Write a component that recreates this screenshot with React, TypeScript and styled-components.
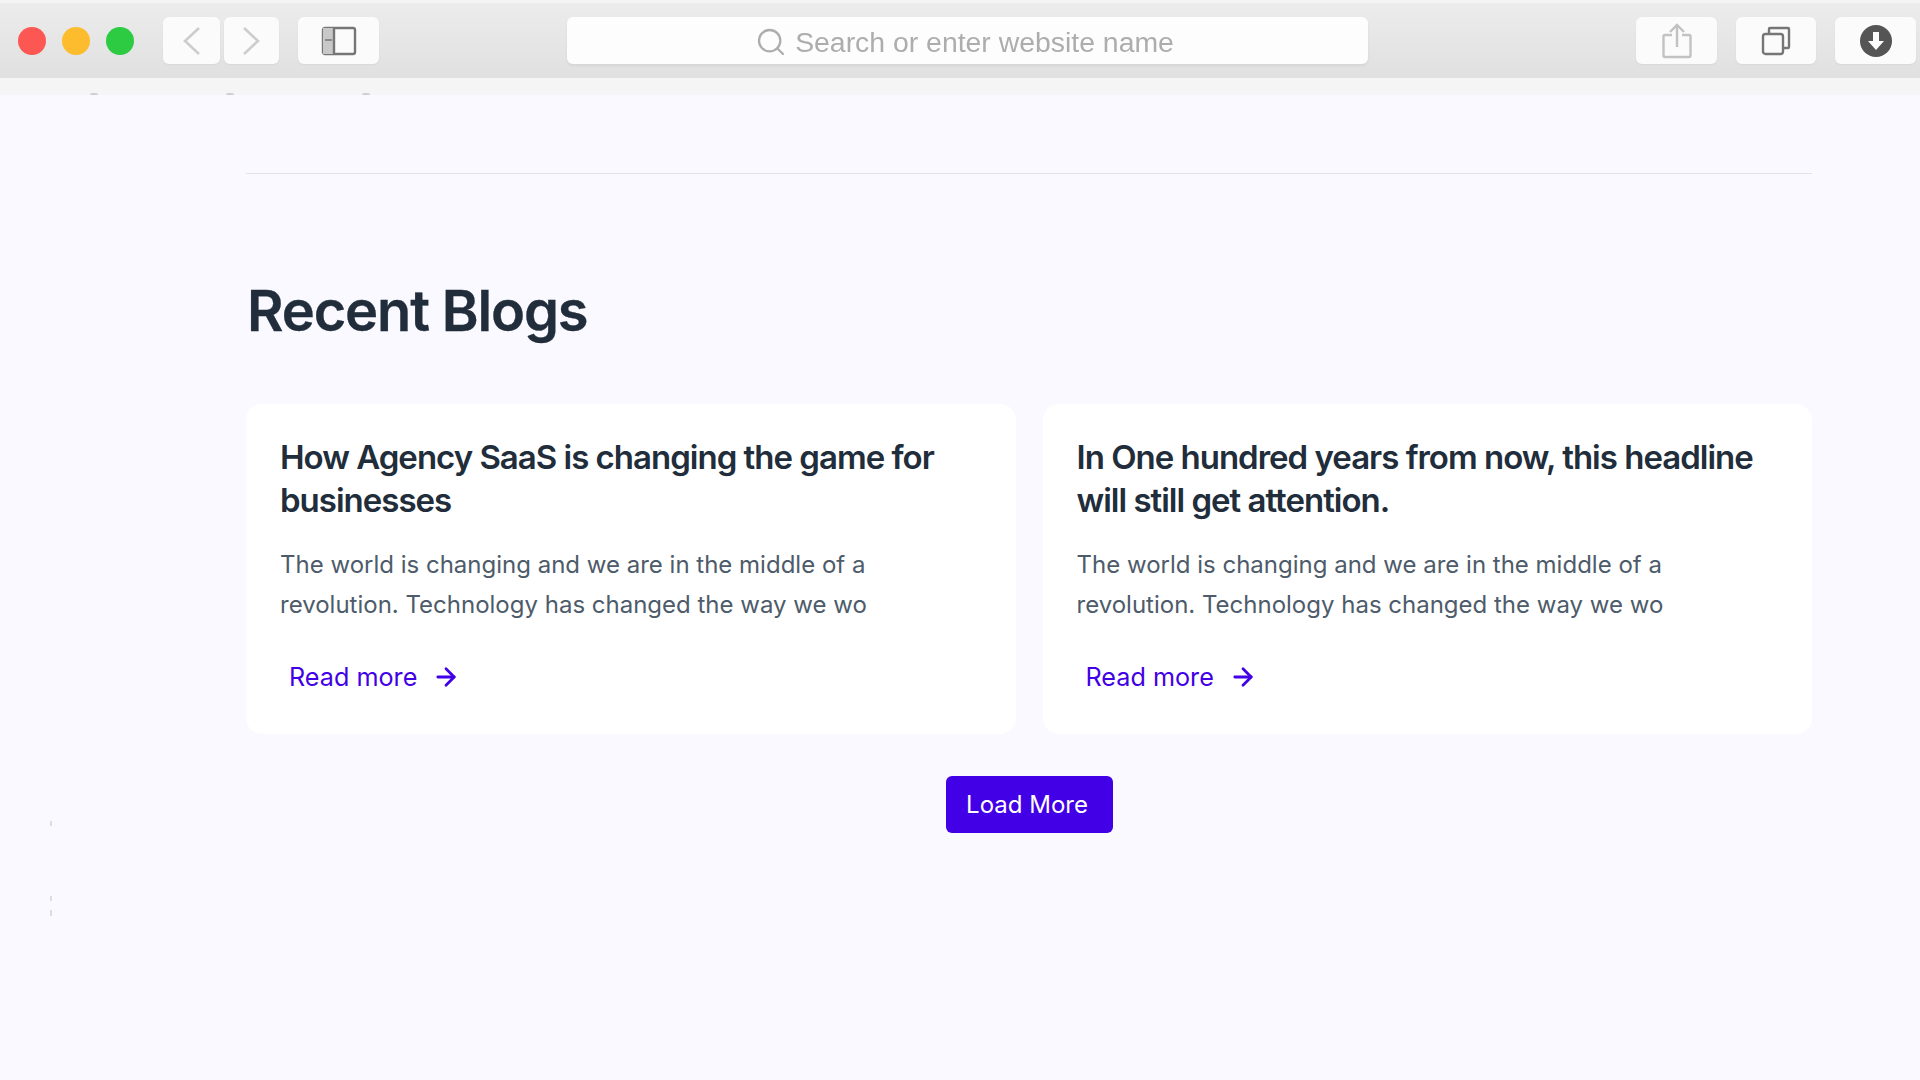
import React from 'react'
import styled, { createGlobalStyle } from 'styled-components'
import { ArrowRight, Search } from 'lucide-react'

const GlobalStyle = createGlobalStyle`
  html, body {
    margin: 0;
    padding: 0;
    background: #f9f9ff;
    font-family: Inter, "Liberation Sans", sans-serif;
  }
  * {
    box-sizing: border-box;
  }
`

const Page = styled.div`
  position: relative;
  width: 1920px;
  height: 1080px;
  overflow: hidden;
  display: flex;
  flex-direction: column;
`

const Toolbar = styled.header`
  height: 78px;
  flex-shrink: 0;
  padding: 14px 4px 14px 18px;
  display: flex;
  align-items: stretch;
  border-top: 3px solid #f4f4f4;
  background: linear-gradient(#ececec, #e0e0e0);
`

const Lights = styled.div`
  display: flex;
  align-items: center;
  gap: 16px;
  margin-right: 29px;
`

const Light = styled.span<{ $color: string }>`
  width: 28px;
  height: 28px;
  border-radius: 50%;
  background: ${(props) => props.$color};
  filter: blur(0.4px);
`

const ToolButton = styled.div<{ $width: number; $gap?: number }>`
  width: ${(props) => props.$width}px;
  margin-right: ${(props) => props.$gap || 0}px;
  flex-shrink: 0;
  display: flex;
  align-items: center;
  justify-content: center;
  background: #fbfbfb;
  border-radius: 6px;
  box-shadow: 0 1px 2px rgba(0, 0, 0, 0.05);

  svg {
    filter: blur(0.5px);
  }
`

const SearchField = styled.div`
  width: 801px;
  margin: 0 268px 0 188px;
  padding-right: 6px;
  flex-shrink: 0;
  display: flex;
  align-items: center;
  justify-content: center;
  gap: 8px;
  background: #fdfdfd;
  border-radius: 6px;
  box-shadow: 0 2px 3px rgba(0, 0, 0, 0.06);
  color: #adadad;
  font-family: "Liberation Sans", sans-serif;
  font-size: 28.4px;
  line-height: 1;

  span {
    filter: blur(0.6px);
    padding-top: 3px;
  }

  svg {
    margin-top: 3px;
    filter: blur(0.5px);
  }
`

const TabStrip = styled.div`
  height: 17px;
  flex-shrink: 0;
  padding-left: 90px;
  display: flex;
  align-items: flex-end;
  gap: 128px;
  background: #f5f5f5;
`

const TabSpeck = styled.span`
  width: 8px;
  height: 2px;
  border-radius: 4px 4px 0 0;
  background: #d0d0d0;
  filter: blur(0.5px);
`

const Main = styled.main`
  flex: 1;
  padding: 78px 108px 0 246px;
`

const Divider = styled.hr`
  margin: 0;
  border: none;
  border-top: 1px solid #e2e2ea;
`

const Heading = styled.h2`
  margin: 103px 0 0 1px;
  font-size: 56px;
  line-height: 68px;
  font-weight: 600;
  letter-spacing: -1.15px;
  color: #212d3b;
  -webkit-text-stroke: 0.3px #212d3b;
`

const CardGrid = styled.div`
  margin-top: 59px;
  display: grid;
  grid-template-columns: 1fr 1fr;
  gap: 27px;
`

const Card = styled.article`
  height: 330px;
  padding: 32px 34px 0;
  background: #fff;
  border-radius: 16px;
`

const CardTitle = styled.h3`
  margin: 0;
  font-size: 33px;
  line-height: 43px;
  font-weight: 600;
  letter-spacing: -1px;
  color: #212d3b;
`

const CardText = styled.p`
  margin: 23px 0 0;
  font-size: 24px;
  line-height: 39.5px;
  color: #4d5b6a;
`

const ReadMore = styled.a`
  margin: 37px 0 0 9px;
  display: inline-flex;
  align-items: center;
  gap: 15px;
  font-size: 25.2px;
  line-height: 32px;
  color: #4200e6;
`

const LoadRow = styled.div`
  margin-top: 42px;
  display: flex;
  justify-content: center;
`

const LoadButton = styled.button`
  width: 167px;
  height: 57px;
  padding: 0 4px 0 0;
  border: none;
  border-radius: 6px;
  background: #4200e6;
  color: #fff;
  font-family: inherit;
  font-size: 24px;
`

const ScrollMark = styled.i<{ $top: number; $height: number }>`
  position: absolute;
  left: 50px;
  top: ${(props) => props.$top}px;
  width: 2px;
  height: ${(props) => props.$height}px;
  background: #dcdce4;
  filter: blur(0.4px);
`

const BackIcon = () => (
  <svg width="19" height="30" viewBox="0 0 19 30" fill="none" stroke="#cdcdcd" strokeWidth="2.6">
    <path d="M17 2 3 15l14 13" />
  </svg>
)

const ForwardIcon = () => (
  <svg width="19" height="30" viewBox="0 0 19 30" fill="none" stroke="#cdcdcd" strokeWidth="2.6">
    <path d="m2 2 14 13L2 28" />
  </svg>
)

const SidebarIcon = () => (
  <svg width="36" height="30" viewBox="0 0 36 30" fill="none" stroke="#767676" strokeWidth="2.4">
    <rect x="2" y="2" width="32" height="26" rx="2" />
    <rect x="2" y="2" width="11" height="26" fill="#c8c8c8" stroke="none" />
    <path d="M13 2v26" />
    <path d="M4 14h7" strokeWidth="1.5" />
  </svg>
)

const ShareIcon = () => (
  <svg width="30" height="36" viewBox="0 0 30 36" fill="none" stroke="#c2c2c2" strokeWidth="2.4">
    <path d="M10 12H3a1.500 1.500 0 0 0-1.500 1.500v19A1.500 1.500 0 0 0 3 34h24a1.500 1.500 0 0 0 1.500-1.500v-19A1.500 1.500 0 0 0 27 12h-7" />
    <path d="M15 24V2M8 9l7-7 7 7" />
  </svg>
)

const TabsIcon = () => (
  <svg width="30" height="30" viewBox="0 0 30 30" fill="none" stroke="#767676" strokeWidth="2.4">
    <rect x="2" y="8" width="20" height="20" rx="2.500" />
    <path d="M8 8V3a1 1 0 0 1 1-1h18a1 1 0 0 1 1 1v18a1 1 0 0 1-1 1h-5" />
  </svg>
)

const DownloadIcon = () => (
  <svg width="32" height="32" viewBox="0 0 32 32">
    <circle cx="16" cy="16" r="16" fill="#555" />
    <path d="M13 7h6v9h5l-8 9-8-9h5z" fill="#fbfbfb" />
  </svg>
)

const posts = [
  {
    title: 'How Agency SaaS is changing the game for businesses',
  },
  {
    title: 'In One hundred years from now, this headline will still get attention.',
  },
]

const excerpt = 'The world is changing and we are in the middle of a revolution. Technology has changed the way we wo'

const App = () => {
  return (
    <Page>
      <GlobalStyle />
      <Toolbar>
        <Lights>
          <Light $color="#fc5753" />
          <Light $color="#fdbc2e" />
          <Light $color="#2ccb42" />
        </Lights>
        <ToolButton $width={57} $gap={4}>
          <BackIcon />
        </ToolButton>
        <ToolButton $width={55} $gap={19}>
          <ForwardIcon />
        </ToolButton>
        <ToolButton $width={81}>
          <SidebarIcon />
        </ToolButton>
        <SearchField>
          <Search size={32} strokeWidth={1.7} />
          <span>Search or enter website name</span>
        </SearchField>
        <ToolButton $width={81} $gap={19}>
          <ShareIcon />
        </ToolButton>
        <ToolButton $width={80} $gap={19}>
          <TabsIcon />
        </ToolButton>
        <ToolButton $width={81}>
          <DownloadIcon />
        </ToolButton>
      </Toolbar>
      <TabStrip>
        <TabSpeck />
        <TabSpeck />
        <TabSpeck />
      </TabStrip>
      <Main>
        <Divider />
        <Heading>Recent Blogs</Heading>
        <CardGrid>
          {posts.map((post) => (
            <Card key={post.title}>
              <CardTitle>{post.title}</CardTitle>
              <CardText>{excerpt}</CardText>
              <ReadMore>
                Read more
                <ArrowRight size={28} strokeWidth={2.4} />
              </ReadMore>
            </Card>
          ))}
        </CardGrid>
        <LoadRow>
          <LoadButton>Load More</LoadButton>
        </LoadRow>
      </Main>
      <ScrollMark $top={821} $height={5} />
      <ScrollMark $top={896} $height={5} />
      <ScrollMark $top={910} $height={6} />
    </Page>
  )
}

export default App
